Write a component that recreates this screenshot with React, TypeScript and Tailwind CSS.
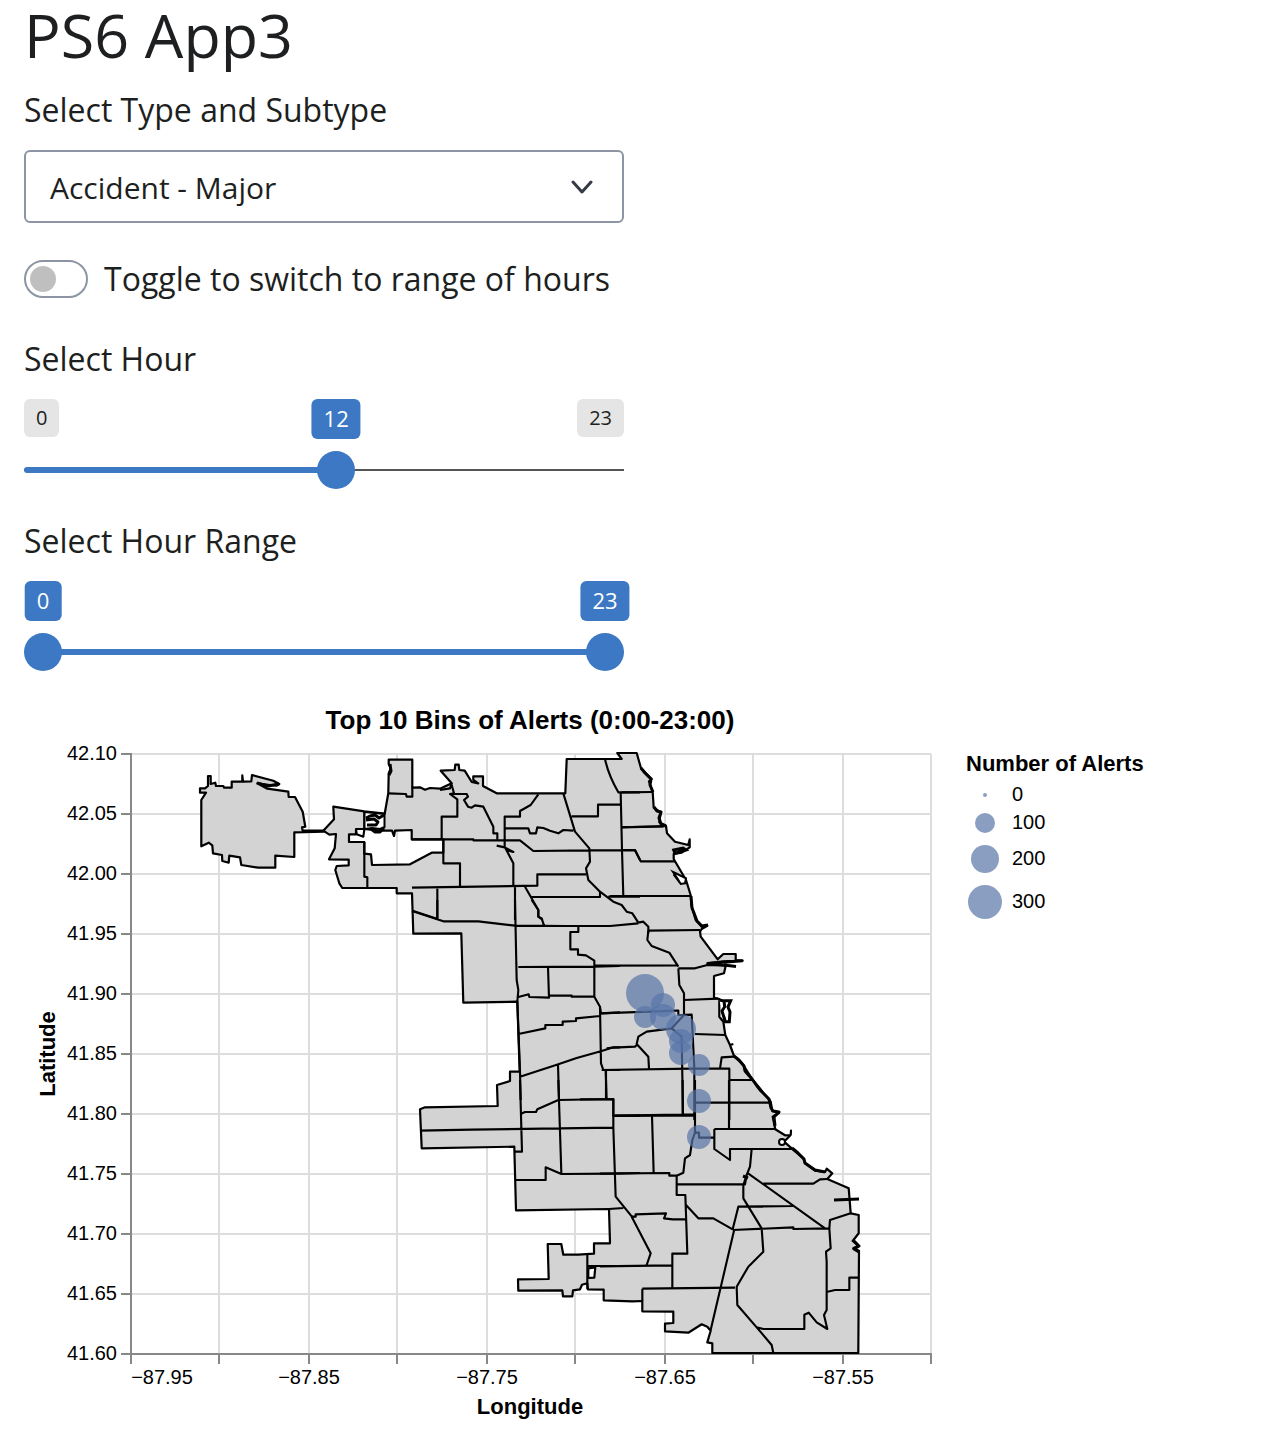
import { useState } from "react";

const xGrid = [219, 309, 397, 487, 575, 665, 753, 843, 931];
const yTicks = [
  { y: 754, label: "42.10" },
  { y: 814, label: "42.05" },
  { y: 874, label: "42.00" },
  { y: 934, label: "41.95" },
  { y: 994, label: "41.90" },
  { y: 1054, label: "41.85" },
  { y: 1114, label: "41.80" },
  { y: 1174, label: "41.75" },
  { y: 1234, label: "41.70" },
  { y: 1294, label: "41.65" },
  { y: 1354, label: "41.60" },
];
const xLabels = [
  { x: 162, label: "−87.95" },
  { x: 309, label: "−87.85" },
  { x: 487, label: "−87.75" },
  { x: 665, label: "−87.65" },
  { x: 843, label: "−87.55" },
];
const bins = [
  { x: 645, y: 993, r: 19 },
  { x: 663, y: 1005, r: 12 },
  { x: 645, y: 1017, r: 11 },
  { x: 663, y: 1017, r: 13 },
  { x: 681, y: 1029, r: 15 },
  { x: 681, y: 1041, r: 12 },
  { x: 681, y: 1053, r: 12 },
  { x: 699, y: 1065, r: 11 },
  { x: 699, y: 1101, r: 12 },
  { x: 699, y: 1137, r: 12 },
];
const legend = [
  { y: 795, r: 2, label: "0" },
  { y: 823, r: 10, label: "100" },
  { y: 859, r: 14, label: "200" },
  { y: 902, r: 17, label: "300" },
];

const airport =
  "M201.3 800L206 792.7H200V788.3H205L208 786V776H210.7V784L215.3 782.7L216 786H223.3L224 787.7H231.7V781.7H242.3V775.3L243 781.7L251.3 781.3L252 775L273.3 780.7L279.3 784L276.7 785.7L270 785L257.3 783.3L267.3 788.7L288.3 791.7L288.7 797H295L302.7 811.7L305.3 826.7L302 827.3L302.7 830.7H324V831.7L294.3 832.3V857L275.3 855.7V867.7H258.3L241.3 865L240 857.3L229.3 855.7L228.7 862.7L222.3 861L222 855L213 853.3L212.3 845.3L208.7 842.7L201.3 846.3Z";
const city =
  "M323.3 830.7L334 819.3L333.3 806.7L364.3 811.3L384.7 813.7L388.3 793.3L388.7 773.3L390.7 768.3L388.7 764V759.7H412.3V787.7L420 787.3L425 789.7L430 788L440 788.7L451.7 783.3L440.7 770.7L454.7 770L455.3 764.7H458.7L459.3 770L464.7 770.7L471.7 782L478.3 783.3L473.3 780V776.3H483V786L496.7 793.3H565.3L566.7 759H621.7L617.3 753H636.7L641 768.3L651.7 779L649 781.3L652.7 792L653.7 807.7L660.7 812.3L659.3 822.3L666 826L667 833.3L675 841.7L688.3 845L689.7 839.3V847.3L681.7 852.7L673.7 854V859L686 880L690.7 895.3L691.3 905L695.7 920L701.7 926.7L707.3 925.7L701.7 929L700 931.7L700.7 936.7L717.7 959.3L723.3 954H735.7V960L742.7 960.7L723.3 961.3L707.3 963.3L725.7 965.7L724 973.3L714 976V997.7L719.3 999V1016.7L723.3 1021.7L725.3 1035L730 1045L734 1056L743.3 1065L752.3 1079.3L770.7 1101.7L772.3 1111L779 1112.7L772.7 1116.7L775.3 1129.3L785 1135.3L790.7 1135L791 1130.7L790.7 1135L784 1141.7L791.7 1148.3L803.3 1158.3L805 1163.3L815 1170.7L825 1172L826.7 1168.7L832.3 1173.3L827.3 1179L848.7 1188.3L850.7 1213.3L858.7 1215V1233.3L852.7 1241L858.3 1245.7L853.3 1248.3L859 1250.7L858.3 1353H712.3V1343.3L707.3 1342.3L710.7 1330.7L707.3 1326.7L701.7 1324.3L688.3 1332.7L665 1331.3V1323.7L673.3 1323V1311.7L642.3 1311.3V1301L632.3 1301.3L603.7 1300.3V1289.7L588 1289.3L587.3 1283.3L582 1284.7L580 1289.3L573 1290.3L572.3 1296.3H563L562.3 1290.3L518.3 1290.7L518 1279.3L548.7 1279L547.7 1244H561.3L563.3 1254.7H578.3L594 1253.7V1243.3H610L609 1209L516 1210.3L514.3 1146.7L421.7 1148.3L420 1109.3L425 1107.3L497.7 1106L497 1085L510 1081V1071.7H519.7L517.3 1001.7L463.3 1002.7L461.3 933.3L413.3 933.7L412 893.3H396.7V888H342.3L339.3 883.3L335.3 870L336.7 866L348.7 865.3V859.7L329 859.3L334.7 848.3L336 834L329.3 834.7Z M349 842H364.3V853.7L371 854.3L372 865L410 864.3L431.7 852.7H443.3V839.3H411.7V830L395 830.7L394 836L392 830.7H380L364 829H356V834.3H349Z M588.3 1268.3L595.3 1267.3L594.3 1277.7L588.3 1278Z";

/* Rough shoreline and jetties, drawn over the city edge. */
const shore =
  "M641 768L645 773L651 779L650 785L653 792M654 807L657 811L661 812L659 818L661 824L666 826M691 896L692 908L694 913L697 921L702 926L708 925M734 1056L739 1060L744 1066L745 1071L752 1079L757 1086L761 1091L769 1099L771 1108L773 1111L779 1112L774 1117L775 1126M792 1148L798 1153L804 1159L805 1163L815 1170L825 1172M743 1176L748 1178M853 1240L859 1246L854 1249L859 1252M390 764L391 771L389 775M674 874L680 882M257 783L268 786L279 784";

/* Community-area borders, one sheet per part of the city, three units to the pixel. */
const sheets = [
  {
    x: 180,
    y: 740,
    d: "M553 214V268M553 306V410L562 412V444M625 160L678 162L680 170H697V140M528 268L530 283L550 290L553 268",
  },
  {
    x: 400,
    y: 740,
    d: "M155 130L150 145L120 150M155 135L162 160L150 162L172 178V230H125V298M34 298H220V301H360L400 333L570 331H705L720 360M150 162H200L204 170L192 180L204 200L215 203L225 196L250 200L280 260V280H292V298M415 163L392 195L360 213V230H314V320M314 265H385L390 280H408L412 262L430 264L450 272L475 280L490 270L520 272M490 160L525 275L568 325L570 365L558 385L565 420L600 455L640 485L665 495L680 515L697 520L715 548M615 57Q625 105 655 157H720M515 229H594V194H662M662 157L666 330L670 470M290 317L314 322L340 336L318 330M314 320L340 370V438M130 298V370H180V438M36 443L412 437V403H558M345 438V540M112 443V540M38 512L115 538M375 440L415 510V530L428 540M392 471H600V455M625 470H720",
  },
  {
    x: 560,
    y: 740,
    d: "M185 157L278 156M185 262L310 259M185 330H225L242 364H345M150 468H392M235 548L250 545L265 560V580M0 558H150L235 550M265 572L420 570",
  },
  {
    x: 400,
    y: 900,
    d: "M345 0L350 240L355 270L352 305L360 515L362 600M36 33L130 64H235L345 77L500 78M112 0V58M395 0L415 30V50L425 55L432 77M535 80V96H511V148H534V164L558 166L583 182V290M355 201L583 200L660 198M444 201L447 293M355 291L386 283L388 291L447 293V287H515V290H583L600 320L603 340L660 337M600 320L603 490L610 510M355 402L436 385V375H488V365L528 363V355L600 348M360 530L475 493L530 474L605 453L640 442H660M474 493L477 600M610 510H660M617 510L620 600",
  },
  {
    x: 580,
    y: 920,
    d: "M205 32L202 60L215 78L268 98L295 140M42 137L290 136M295 145H345L382 135L437 137M295 145L298 195L312 220V285M312 240L415 236M60 280L290 272H295V285L335 284L343 445V600M312 285L275 325L200 335L175 350L170 372L205 410L207 445M345 342L436 345M80 385L100 383L165 380L172 374M65 450L335 446H420L425 412L462 410M420 446H448V600M448 480H517M345 548H572M275 325L305 350L309 585M78 450V535M0 538H100V588L340 586M450 375L460 372",
  },
  {
    x: 400,
    y: 1080,
    d: "M360 0L366 215H343M362 102L375 96H408L412 88L475 60L640 57V143M475 0L484 280M60 152L215 149L640 143L647 350L700 415M347 300H437V262L484 282L640 281L720 279M640 107H720M627 387L670 384M562 521V628M562 558H720",
  },
  {
    x: 600,
    y: 1080,
    d: "M45 107L250 104H285V0M248 0V104M387 0V145M156 107L161 279M0 281L208 279V287H230L250 278L255 235L270 225L277 180L285 158V104M285 158H297V173H340M343 147H525M343 147V207L390 240V207H575M455 207L450 260L440 285L430 315V355L485 445L490 515L445 560L410 620L412 675L470 742L515 795L520 819M230 285V345H256L262 521H217V622M230 313H435L440 285M440 277L675 445M490 311H640L660 298L682 297M258 375L295 415H340L398 448M95 410H107V403L198 400L192 415L218 418H256M95 410L152 520L140 555M0 559L214 556M398 448L415 380L580 378M398 450L580 442V447L688 445L690 420L752 400M688 445L692 505L678 515L680 545V690L672 705L682 747L650 727L626 698L613 704V747H490L470 742M127 626L405 623M127 626V663M403 448L332 750M680 636L705 630H748V593H776",
  },
];

const thumb =
  "pointer-events-none absolute inset-0 m-0 h-full w-full appearance-none bg-transparent outline-none [&::-webkit-slider-thumb]:pointer-events-auto [&::-webkit-slider-thumb]:size-[38px] [&::-webkit-slider-thumb]:cursor-pointer [&::-webkit-slider-thumb]:appearance-none [&::-webkit-slider-thumb]:rounded-full [&::-webkit-slider-thumb]:bg-[#3c78c3]";

const at = (v: number) => `calc(19px + (100% - 38px) * ${v / 23})`;

function Value({ value }: { value: number }) {
  return (
    <span
      className="absolute top-0 h-10 -translate-x-1/2 rounded-md bg-[#3c78c3] px-3 text-[22px] leading-[38px] font-medium text-white"
      style={{ left: at(value) }}
    >
      {value}
    </span>
  );
}

function AlertsMap() {
  return (
    <svg
      viewBox="24 700 1136 730"
      className="block h-auto w-full max-w-[1136px] font-['Liberation_Sans',Arial,sans-serif]"
      role="img"
      aria-label="Top 10 Bins of Alerts (0:00-23:00)"
    >
      <text x="530" y="729" textAnchor="middle" className="text-[26px] font-bold">
        Top 10 Bins of Alerts (0:00-23:00)
      </text>
      <g stroke="#ddd" strokeWidth="2">
        {xGrid.map((x) => (
          <path key={x} d={`M${x} 754V1354`} />
        ))}
        {yTicks.map((t) => (
          <path key={t.y} d={`M131 ${t.y}H931`} />
        ))}
      </g>
      <g stroke="#888" strokeWidth="2">
        <path d="M131 753V1364M121 1354H932" />
        {xGrid.map((x) => (
          <path key={x} d={`M${x} 1354V1364`} />
        ))}
        {yTicks.map((t) => (
          <path key={t.y} d={`M121 ${t.y}H131`} />
        ))}
      </g>
      <g fill="lightgray" fillRule="evenodd" stroke="#000" strokeWidth="2.2" strokeLinejoin="round">
        <path d={airport} />
        <path d={city} />
      </g>
      {sheets.map((s) => (
        <path
          key={`${s.x}-${s.y}`}
          d={s.d}
          transform={`translate(${s.x} ${s.y}) scale(0.33333)`}
          fill="none"
          stroke="#000"
          strokeWidth="6.4"
          strokeLinejoin="round"
        />
      ))}
      <path d="M621 827.3L664 826.3" stroke="#000" strokeWidth="2" />
      <path d={shore} fill="none" stroke="#000" strokeWidth="3" strokeLinejoin="round" />
      <g fill="#fff" stroke="#000" strokeWidth="2">
        <path d="M364.5 812L384.5 814V827L380 829L372 828L364.5 829Z" />
        <path d="M673.7 850L683 848L686 850L675 853.3Z" strokeWidth="3" />
        <path d="M673 872L677.3 874L686 878.3L685 883.3L680.7 884L677.3 878.3Z" />
        <path d="M719.3 1000L724 1001L724.7 1006.7L722 1011L724.7 1020M724 1000.7H730.7L728 1007L730 1012L729.3 1021.7H725.3L724 1017" strokeWidth="3" />
        <circle cx="782" cy="1142" r="3" />
      </g>
      <path
        d="M366 818L370 816L375 815L379 818L384 815M366 820L374 819L378 822L376 825L367 825M371 829L375 832H380L384 828"
        fill="none"
        stroke="#000"
        strokeWidth="3"
        strokeLinejoin="round"
      />
      <path d="M707.3 963.5L742.7 960.7M724 965L736 966.5M834 1200L859 1199" stroke="#000" strokeWidth="3" />
      <g fill="#5875a8" fillOpacity="0.7">
        {bins.map((b) => (
          <circle key={`${b.x}-${b.y}`} cx={b.x} cy={b.y} r={b.r} />
        ))}
        {legend.map((l) => (
          <circle key={l.label} cx="985" cy={l.y} r={l.r} />
        ))}
      </g>
      <g className="text-[20px]">
        {yTicks.map((t) => (
          <text key={t.y} x="117" y={t.y + 6} textAnchor="end">
            {t.label}
          </text>
        ))}
        {xLabels.map((t) => (
          <text key={t.x} x={t.x} y="1384" textAnchor="middle">
            {t.label}
          </text>
        ))}
        {legend.map((l) => (
          <text key={l.label} x="1012" y={l.y + 6}>
            {l.label}
          </text>
        ))}
      </g>
      <g className="text-[22px] font-bold">
        <text x="530" y="1414" textAnchor="middle">
          Longitude
        </text>
        <text transform="translate(55 1054) rotate(-90)" textAnchor="middle">
          Latitude
        </text>
        <text x="966" y="771">
          Number of Alerts
        </text>
      </g>
    </svg>
  );
}

export default function App() {
  const [hour, setHour] = useState(12);
  const [from, setFrom] = useState(0);
  const [to, setTo] = useState(23);
  const [range, setRange] = useState(false);
  return (
    <main className="bg-white px-6 font-['Open_Sans','Noto_Sans',sans-serif] text-[32px] leading-12 text-[#1d1f21]">
      <h2 className="text-[61px] leading-[70px]">PS6 App3</h2>
      <div className="mt-4 max-w-[600px]">
        <label htmlFor="kind" className="block">
          Select Type and Subtype
        </label>
        <div className="relative mt-4">
          <select
            id="kind"
            className="block h-[73px] w-full appearance-none rounded-md border-2 border-[#8d95a5] bg-white px-6 pt-[2px] text-[30px]"
          >
            <option>Accident - Major</option>
          </select>
          <svg
            viewBox="0 0 22 14"
            className="pointer-events-none absolute top-[30px] right-[31px] h-[14px] w-[22px]"
            fill="none"
            stroke="#343a46"
            strokeWidth="3"
            strokeLinecap="round"
            strokeLinejoin="round"
          >
            <path d="M2 2L11 12L20 2" />
          </svg>
        </div>
        <label className="mt-8 flex items-center gap-4">
          <input
            type="checkbox"
            role="switch"
            checked={range}
            onChange={(e) => setRange(e.target.checked)}
            className="peer sr-only"
          />
          <span className="flex h-[38px] w-16 shrink-0 items-center rounded-full border-2 border-[#8d95a5] px-1 peer-checked:justify-end">
            <span className="size-[26px] rounded-full bg-[#bfbfbf]" />
          </span>
          <span className="whitespace-nowrap">Toggle to switch to range of hours</span>
        </label>
        <label htmlFor="hour" className="mt-8 block">
          Select Hour
        </label>
        <div className="relative mt-4 flex h-[52px] justify-between">
          <span className="h-[38px] rounded-md bg-[#e5e5e5] px-3 text-xl leading-[38px]">0</span>
          <span className="h-[38px] rounded-md bg-[#e5e5e5] px-3 text-xl leading-[38px]">23</span>
          <Value value={hour} />
        </div>
        <div className="relative flex h-[38px] items-center">
          <div className="h-[2px] w-full bg-[#555]" />
          <div className="absolute left-0 h-[6px] rounded-l-sm bg-[#3c78c3]" style={{ width: at(hour) }} />
          <input
            id="hour"
            type="range"
            min={0}
            max={23}
            value={hour}
            onChange={(e) => setHour(+e.target.value)}
            className={thumb}
          />
        </div>
        <label htmlFor="from" className="mt-7 block">
          Select Hour Range
        </label>
        <div className="relative mt-4 h-[52px]">
          <Value value={from} />
          <Value value={to} />
        </div>
        <div className="relative flex h-[38px] items-center">
          <div className="h-[2px] w-full bg-[#555]" />
          <div
            className="absolute h-[6px] bg-[#3c78c3]"
            style={{ left: at(from), right: `calc(100% - ${at(to)})` }}
          />
          <input
            id="from"
            type="range"
            min={0}
            max={23}
            value={from}
            onChange={(e) => setFrom(Math.min(+e.target.value, to))}
            className={thumb}
          />
          <input
            aria-label="Select Hour Range end"
            type="range"
            min={0}
            max={23}
            value={to}
            onChange={(e) => setTo(Math.max(+e.target.value, from))}
            className={thumb}
          />
        </div>
      </div>
      <div className="mt-[29px]">
        <AlertsMap />
      </div>
    </main>
  );
}
